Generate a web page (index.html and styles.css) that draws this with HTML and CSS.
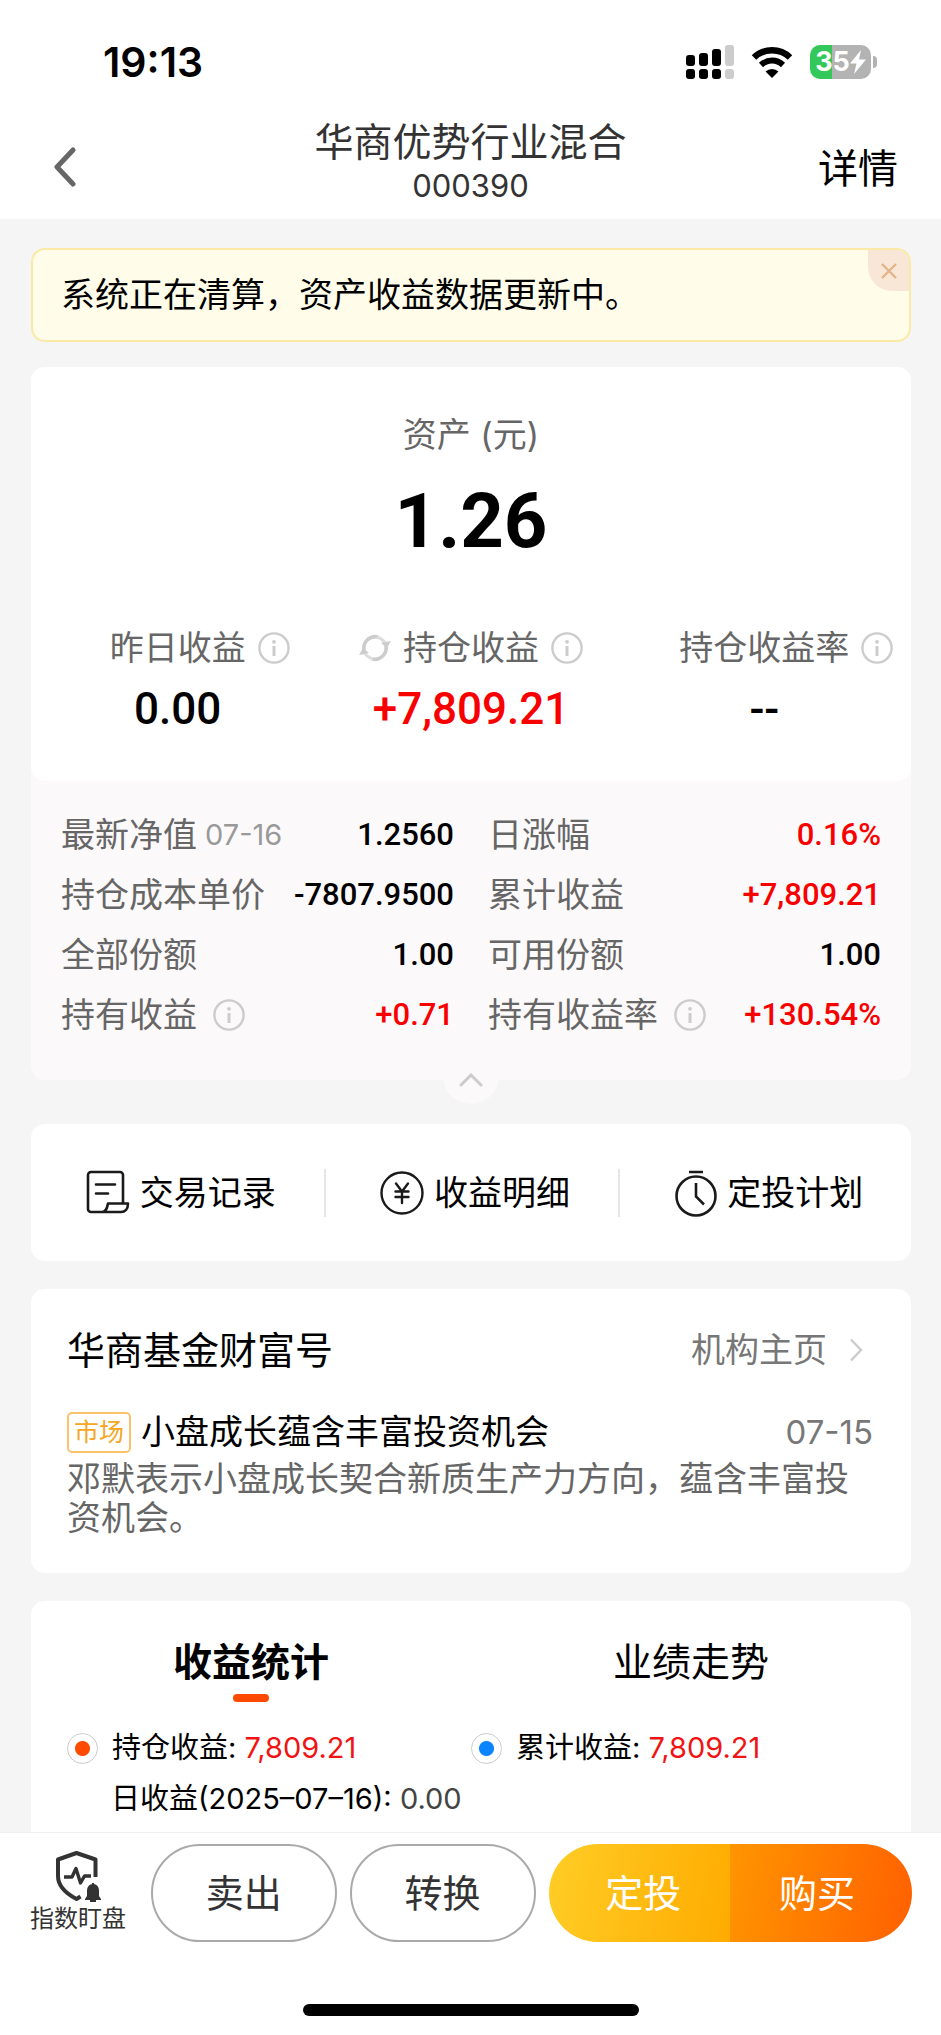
FILE: index.html
```html
<!DOCTYPE html>
<html lang="zh-CN">
<head>
    <meta charset="UTF-8">
    <meta name="viewport" content="width=device-width, initial-scale=1.0">
    <title>华商优势行业混合</title>
    <link rel="stylesheet" href="styles.css">
</head>
<body>
    <svg class="sprite" aria-hidden="true">
        <symbol id="info" viewBox="0 0 32 32">
            <circle cx="16" cy="16" r="14.6" fill="none" stroke="#ccc" stroke-width="2.4"/>
            <circle cx="16" cy="9.8" r="1.9" fill="#ccc"/>
            <path d="M16 14v10" stroke="#ccc" stroke-width="3"/>
        </symbol>
    </svg>

    <div class="status-bar">
        <span class="time">19:13</span>
        <div class="status-icons">
            <svg width="48" height="34" viewBox="0 0 48 34">
                <rect x="0" y="10" width="9" height="11" rx="3"/>
                <rect x="13" y="8" width="9" height="13" rx="3"/>
                <rect x="26" y="4" width="9" height="17" rx="3"/>
                <rect x="39" y="0" width="9" height="21" rx="3" fill="#ccc"/>
                <rect x="0" y="24" width="9" height="10" rx="3"/>
                <rect x="13" y="24" width="9" height="10" rx="3"/>
                <rect x="26" y="24" width="9" height="10" rx="3"/>
                <rect x="39" y="24" width="9" height="10" rx="3" fill="#ccc"/>
            </svg>
            <svg class="wifi" width="42" height="32" viewBox="0 0 42 32">
                <path d="M3 11.5a26 26 0 0 1 36 0" fill="none" stroke="#000" stroke-width="6.4"/>
                <path d="M10 19a16 16 0 0 1 22 0" fill="none" stroke="#000" stroke-width="6"/>
                <path d="M14.5 25.5a9.5 9.5 0 0 1 13 0L21 32z"/>
            </svg>
            <div class="battery">
                <span class="battery-body">35<svg width="16" height="24" viewBox="0 0 16 24"><path d="M11 0L0 13.5h6.5L4 24 16 9.5H9z" fill="#fff"/></svg></span>
                <span class="battery-cap"></span>
            </div>
        </div>
    </div>

    <header class="nav">
        <button class="back" aria-label="返回">
            <svg width="24" height="40" viewBox="0 0 24 40"><path d="M20 3L4 20l16 17" fill="none" stroke="#666" stroke-width="5" stroke-linecap="round" stroke-linejoin="round"/></svg>
        </button>
        <div class="nav-title">
            <h1>华商优势行业混合</h1>
            <p>000390</p>
        </div>
        <a class="nav-link" href="#">详情</a>
    </header>

    <main>
        <div class="notice">
            <p>系统正在清算，资产收益数据更新中。</p>
            <button class="notice-close" aria-label="关闭">
                <svg width="16" height="16" viewBox="0 0 16 16"><path d="M1 1l14 14M15 1L1 15" stroke="#e3b58a" stroke-width="2.4"/></svg>
            </button>
        </div>

        <section class="card asset">
            <div class="asset-top">
                <p class="asset-label">资产 (元)</p>
                <p class="asset-total">1.26</p>
                <div class="summary">
                    <div>
                        <div class="summary-label"><span></span>昨日收益<svg class="info"><use href="#info"/></svg></div>
                        <p>0.00</p>
                    </div>
                    <div>
                        <div class="summary-label">
                            <svg class="refresh" viewBox="0 0 32 32">
                                <path d="M5 18A11.5 11.5 0 0 1 19 5M27 14a11.5 11.5 0 0 1-14 13" fill="none" stroke="#ccc" stroke-width="3.6"/>
                                <path d="M18 5.2A11.5 11.5 0 0 1 26 11M14 26.800A11.5 11.5 0 0 1 6 21" fill="none" stroke="#ddd" stroke-width="3"/>
                                <path d="M32 9l-4 7-6-5zM0 23l4-7 6 5z" fill="#ccc"/>
                            </svg>持仓收益<svg class="info"><use href="#info"/></svg>
                        </div>
                        <p class="up">+7,809.21</p>
                    </div>
                    <div>
                        <div class="summary-label"><span></span>持仓收益率<svg class="info"><use href="#info"/></svg></div>
                        <p>--</p>
                    </div>
                </div>
            </div>
            <dl class="details">
                <div><dt>最新净值<small>07-16</small></dt><dd>1.2560</dd></div>
                <div><dt>日涨幅</dt><dd class="up">0.16%</dd></div>
                <div><dt>持仓成本单价</dt><dd>-7807.9500</dd></div>
                <div><dt>累计收益</dt><dd class="up">+7,809.21</dd></div>
                <div><dt>全部份额</dt><dd>1.00</dd></div>
                <div><dt>可用份额</dt><dd>1.00</dd></div>
                <div><dt>持有收益<svg class="info"><use href="#info"/></svg></dt><dd class="up">+0.71</dd></div>
                <div><dt>持有收益率<svg class="info"><use href="#info"/></svg></dt><dd class="up">+130.54%</dd></div>
            </dl>
            <button class="collapse" aria-label="收起">
                <svg width="24" height="14" viewBox="0 0 24 14"><path d="M2 12L12 2l10 10" fill="none" stroke="#ccc" stroke-width="3" stroke-linecap="round"/></svg>
            </button>
        </section>

        <nav class="card shortcuts">
            <a href="#">
                <svg width="44" height="48" viewBox="0 0 44 48" fill="none" stroke="#1a1a1a" stroke-width="2.6" stroke-linejoin="round" stroke-linecap="round">
                    <path d="M37 34V6a3 3 0 0 0-3-3H5a3 3 0 0 0-3 3v34a3 3 0 0 0 3 3h30c4 0 7-3 7-8.500H22c-1 5-2 8.500-6 8.500"/>
                    <path d="M10 15.500h19M10 24.500h12"/>
                </svg>交易记录
            </a>
            <a href="#">
                <svg width="44" height="48" viewBox="0 0 44 48" fill="none" stroke="#1a1a1a" stroke-width="2.4" stroke-linecap="round">
                    <circle cx="22" cy="24" r="20.5"/>
                    <path d="M16 14.500l6 8 6-8M22 22.500V34M15.500 22.500h13M15.500 28h13"/>
                </svg>收益明细
            </a>
            <a href="#">
                <svg width="44" height="48" viewBox="0 0 44 48" fill="none" stroke="#1a1a1a" stroke-width="2.6">
                    <circle cx="23" cy="27" r="19.5"/>
                    <path d="M16 3h14M23 14v13.500l8 8"/>
                </svg>定投计划
            </a>
        </nav>

        <section class="card news">
            <div class="news-head">
                <h2>华商基金财富号</h2>
                <a href="#">机构主页<svg width="14" height="24" viewBox="0 0 14 24"><path d="M2 1.500L12 12 2 22.500" fill="none" stroke="#ccc" stroke-width="2.4"/></svg></a>
            </div>
            <div class="news-row">
                <span class="tag">市场</span>
                <h3>小盘成长蕴含丰富投资机会</h3>
                <time>07-15</time>
            </div>
            <p>邓默表示小盘成长契合新质生产力方向，蕴含丰富投资机会。</p>
        </section>

        <section class="card stats">
            <div class="tabs">
                <button class="active">收益统计</button>
                <button>业绩走势</button>
            </div>
            <div class="legend">
                <div><i class="dot"></i>持仓收益: <span>7,809.21</span></div>
                <div><i class="dot blue"></i>累计收益: <span>7,809.21</span></div>
            </div>
            <p class="daily">日收益(2025–07–16): <span>0.00</span></p>
        </section>
    </main>

    <footer>
        <div class="actions">
            <a class="watch" href="#">
                <svg width="50" height="52" viewBox="-2 0 50 52" fill="none" stroke="#333" stroke-width="4">
                    <path d="M40.500 27V9.500L21.500 3 3 9.500V26c0 10 7 17 18.500 23l4-2.500" stroke-linejoin="round"/>
                    <path d="M9 27h8l4-8.500L25.500 33l4-7H36" stroke-width="3.4" stroke-linejoin="round"/>
                    <path d="M38 34c-4 0-6 3-6 7v5l-2 3v1h16v-1l-2-3v-5c0-4-2-7-6-7z" fill="#333" stroke="none"/>
                    <path d="M35 51h6M38 35v-2" stroke-width="2"/>
                </svg>
                指数盯盘
            </a>
            <button class="outline">卖出</button>
            <button class="outline">转换</button>
            <div class="buy-group">
                <button class="plan">定投</button>
                <button class="buy">购买</button>
            </div>
        </div>
        <div class="home-bar"></div>
    </footer>
</body>
</html>
```
FILE: styles.css
```css
* {
    box-sizing: border-box;
    margin: 0;
    padding: 0;
}
body {
    font-family: Inter, "Noto Sans CJK SC", sans-serif;
    font-size: 34px;
    line-height: 48px;
    color: #000;
    background-color: #fff;
}
h1, h2, h3 {
    font-weight: normal;
}
a {
    color: inherit;
    text-decoration: none;
}
button {
    font: inherit;
    color: inherit;
    border: none;
    background: none;
}
svg {
    flex-shrink: 0;
}
.sprite {
    position: absolute;
    width: 0;
    height: 0;
}
.up {
    color: #f90000;
}
.info {
    width: 32px;
    height: 32px;
}

/* status bar */
.status-bar {
    display: flex;
    justify-content: space-between;
    align-items: center;
    padding: 38px 64px 0 103px;
}
.time {
    font-size: 41px;
    font-weight: 600;
}
.status-icons {
    display: flex;
    align-items: center;
}
.wifi {
    margin: 0 17px;
}
.battery {
    display: flex;
    align-items: center;
    gap: 2px;
}
.battery-body {
    display: flex;
    align-items: center;
    justify-content: center;
    width: 61px;
    height: 34px;
    border-radius: 10px;
    background: linear-gradient(to right, #34c759 36%, #b3b3b3 36%);
    color: #fff;
    font-size: 27px;
    font-weight: 700;
}
.battery-cap {
    width: 4px;
    height: 12px;
    border-radius: 0 4px 4px 0;
    background-color: #b3b3b3;
}

/* nav */
.nav {
    display: grid;
    grid-template-columns: 1fr auto 1fr;
    align-items: center;
    padding: 33px 43px 0;
}
.back {
    justify-self: start;
    display: flex;
    padding: 0 10px 4px;
}
.nav-title {
    text-align: center;
    color: #333;
    padding-bottom: 12px;
}
.nav-title h1 {
    font-size: 39px;
    line-height: 46px;
}
.nav-title p {
    font-size: 31px;
    line-height: 42px;
}
.nav-link {
    justify-self: end;
    font-size: 40px;
}

main {
    padding: 29px 30px 0 31px;
    background-color: #f5f5f5;
}
.card {
    background-color: #fff;
    border-radius: 14px;
    margin-bottom: 28px;
}

/* notice */
.notice {
    position: relative;
    overflow: hidden;
    padding: 21px 28px;
    margin-bottom: 25px;
    border: 2px solid #faeaa6;
    border-radius: 14px;
    background-color: #fffdea;
}
.notice-close {
    position: absolute;
    top: 0;
    right: 0;
    display: flex;
    align-items: center;
    justify-content: center;
    width: 41px;
    height: 41px;
    border-radius: 0 0 0 24px;
    background-color: #f8e6d6;
}

/* asset */
.asset {
    position: relative;
    background-color: #fcf9fa;
    margin-bottom: 44px;
}
.asset-top {
    padding: 44px 0;
    text-align: center;
    background-color: #fff;
    border-radius: 14px;
}
.asset-label {
    color: #666;
}
.asset-total {
    margin: 14px 0 55px;
    font-family: Roboto, sans-serif;
    font-size: 76px;
    font-weight: 700;
    line-height: 96px;
}
.summary {
    display: grid;
    grid-template-columns: repeat(3, 1fr);
}
.summary-label {
    display: grid;
    grid-template-columns: 1fr auto 1fr;
    align-items: center;
    gap: 12px;
    color: #666;
}
.refresh {
    justify-self: end;
    width: 32px;
    height: 32px;
}
.summary p {
    margin-top: 9px;
    font-family: Roboto, sans-serif;
    font-size: 44px;
    font-weight: 500;
    line-height: 56px;
}
.details {
    display: grid;
    grid-template-columns: 1fr 1fr;
    column-gap: 34px;
    padding: 24px 30px 35px;
    line-height: 60px;
}
.details div {
    display: flex;
    justify-content: space-between;
}
.details dt {
    display: flex;
    align-items: center;
    color: #666;
}
.details dt .info {
    margin-left: 16px;
}
.details small {
    margin-left: 8px;
    font-size: 29px;
    color: #999;
}
.details dd {
    font-family: Roboto, sans-serif;
    font-size: 31px;
    font-weight: 500;
}
.collapse {
    position: absolute;
    bottom: -24px;
    left: 50%;
    margin-left: -28px;
    width: 56px;
    height: 56px;
    padding-top: 8px;
    border-radius: 50%;
    background-color: #fcf9fa;
    display: flex;
    align-items: center;
    justify-content: center;
}

/* shortcuts */
.shortcuts {
    display: grid;
    grid-template-columns: repeat(3, 1fr);
    padding: 45px 0 44px;
}
.shortcuts a {
    display: flex;
    align-items: center;
    justify-content: center;
    gap: 10px;
    padding-left: 6px;
}
.shortcuts a + a {
    border-left: 2px solid #e5e5e5;
}

/* news */
.news {
    padding: 37px 38px 36px 36px;
}
.news-head {
    display: flex;
    align-items: center;
    justify-content: space-between;
    margin-bottom: 34px;
}
.news-head h2 {
    font-size: 38px;
}
.news-head a {
    display: flex;
    align-items: center;
    gap: 22px;
    padding-right: 10px;
    color: #777;
}
.news-row {
    display: flex;
    align-items: center;
    gap: 10px;
}
.news-row h3 {
    flex: 1;
    font-size: 34px;
}
.news-row time {
    font-size: 33px;
    color: #777;
}
.tag {
    padding: 0 5px;
    border: 2px solid #f9c26b;
    border-radius: 5px;
    font-size: 25px;
    line-height: 37px;
    color: #f5a623;
}
.news p {
    color: #666;
    line-height: 39px;
    padding-top: 3px;
}

/* stats */
.stats {
    margin-bottom: 0;
    border-radius: 14px 14px 0 0;
    padding: 37px 0 6px;
    font-size: 29px;
}
.tabs {
    display: grid;
    grid-template-columns: 1fr 1fr;
    margin-bottom: 22px;
}
.tabs button {
    font-size: 39px;
    padding-bottom: 16px;
}
.tabs .active {
    font-weight: 700;
}
.tabs .active::after {
    content: "";
    display: block;
    width: 36px;
    height: 8px;
    margin: 8px auto -16px;
    border-radius: 4px;
    background-color: #ff4a00;
}
.legend {
    display: grid;
    grid-template-columns: 1fr 1fr;
    padding: 0 36px;
}
.legend div {
    display: flex;
    align-items: center;
    white-space: pre;
}
.legend span {
    color: #f01414;
}
.dot {
    width: 31px;
    height: 31px;
    margin-right: 14px;
    border: 1px solid #ccc;
    border-radius: 50%;
    background: radial-gradient(circle, #ff4a00 7px, #fff 8px);
}
.dot.blue {
    background: radial-gradient(circle, #0a84ff 7px, #fff 8px);
}
.daily {
    padding: 3px 80px;
}
.daily span {
    color: #444;
}

/* bottom bar */
footer {
    border-top: 1px solid #eee;
    background-color: #fff;
    padding-bottom: 20px;
}
.actions {
    display: flex;
    align-items: center;
    gap: 13px;
    padding: 11px 29px 0 30px;
}
.watch {
    display: flex;
    flex-direction: column;
    align-items: center;
    margin-right: 12px;
    font-size: 24px;
    line-height: 34px;
    color: #333;
    white-space: nowrap;
}
.actions button {
    font-size: 38px;
    height: 98px;
}
.outline {
    flex: 1;
    border: 2px solid #aaa;
    border-radius: 49px;
    color: #333;
}
.buy-group {
    flex: 2;
    display: flex;
    border-radius: 49px;
    overflow: hidden;
    color: #fff;
}
.buy-group button {
    flex: 1;
}
.buy-group .plan {
    padding-left: 8px;
    background: linear-gradient(100deg, #ffcd26, #ffab00);
}
.buy-group .buy {
    padding-right: 8px;
    background: linear-gradient(100deg, #ff9500, #ff6000);
}
.home-bar {
    width: 336px;
    height: 12px;
    margin: 62px auto 0;
    border-radius: 6px;
    background-color: #000;
}
```
